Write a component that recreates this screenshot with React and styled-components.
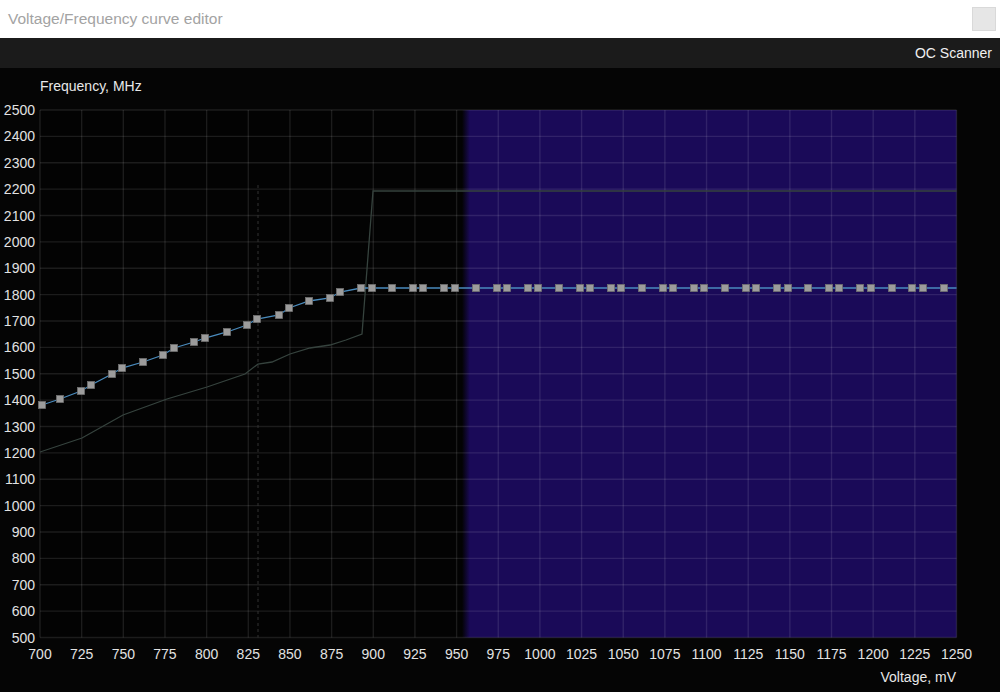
import React from "react";
import styled, { createGlobalStyle } from "styled-components";

const GlobalStyle = createGlobalStyle`
  html, body {
    margin: 0;
    padding: 0;
    background: #050505;
    font-family: "Liberation Sans", Arial, sans-serif;
  }
`;

// plot geometry (page pixels)
const LEFT = 40;
const RIGHT = 956.5;
const TOP = 110;
const BOTTOM = 637.5;
const X = (v) => LEFT + ((v - 700) * (RIGHT - LEFT)) / 550;
const Y = (f) => TOP + ((2500 - f) * (BOTTOM - TOP)) / 2000;

const volts = [];
for (let v = 700; v <= 1250; v += 25) volts.push(v);
const freqs = [];
for (let f = 500; f <= 2500; f += 100) freqs.push(f);

// curve points read off the editor
const rising = [
  [42, 405], [60, 399], [81, 391], [91, 385], [112, 374], [122, 368],
  [143, 362], [163, 355], [174, 348], [194, 342], [205, 338], [227, 332],
  [247, 325], [257, 319], [279, 315], [289, 308], [309, 301], [330, 298],
  [340, 292],
];
const flatX = [
  361, 372, 392, 413, 423, 444, 455, 476, 497, 507, 528, 538, 559, 580, 590,
  611, 621, 642, 663, 673, 694, 704, 725, 746, 756, 777, 788, 808, 829, 839,
  860, 871, 892, 912, 923, 944,
];
const points = [...rising, ...flatX.map((x) => [x, 288])];

const baseCurve = [
  [40, 452], [82, 438], [123, 415], [167, 399], [207, 387], [245, 374],
  [258, 364], [272, 362], [290, 354], [310, 348], [330, 345], [346, 340],
  [362, 334], [373, 191], [RIGHT, 191],
];

const Window = styled.div`
  display: flex;
  flex-direction: column;
  width: 1000px;
  height: 692px;
  overflow: hidden;
  background: #050505;
`;

const TitleBar = styled.div`
  height: 38px;
  display: flex;
  align-items: center;
  justify-content: space-between;
  padding: 0 4px 0 8px;
  background: #ffffff;
  flex-shrink: 0;
`;

const TitleText = styled.span`
  font-size: 15.5px;
  color: #a3a3a3;
`;

const WinButton = styled.div`
  width: 22px;
  height: 22px;
  background: #e6e6e6;
  border: 1px solid #d9d9d9;
`;

const Toolbar = styled.div`
  height: 30px;
  display: flex;
  align-items: center;
  justify-content: flex-end;
  padding-right: 8px;
  background: #1b1b1b;
  flex-shrink: 0;
`;

const ScanButton = styled.span`
  font-size: 14px;
  color: #f0f0f0;
  cursor: pointer;
`;

const ChartPanel = styled.div`
  flex: 1;
  display: flex;
  flex-direction: column;
  padding-top: 8px;
  background: #050505;
`;

const AxisTitle = styled.div`
  height: 20px;
  line-height: 20px;
  font-size: 14px;
  color: #e8e8e8;
  text-align: ${({ $right }) => ($right ? "right" : "left")};
  padding: ${({ $right }) => ($right ? "0 44px 0 0" : "0 0 0 40px")};
  margin-top: ${({ $right }) => ($right ? "1px" : "0")};
`;

const Plot = styled.svg`
  display: block;
  width: 1000px;
  height: 570px;
  font-family: "Liberation Sans", Arial, sans-serif;
  font-size: 14px;
`;

const GRID = "rgba(255,255,255,0.1)";

const Chart = () => (
  <Plot viewBox="0 96 1000 570">
    <defs>
      <linearGradient id="zoneEdge" x1="0" x2="1" y1="0" y2="0">
        <stop offset="0" stopColor="#1a0a58" stopOpacity="0" />
        <stop offset="1" stopColor="#1a0a58" />
      </linearGradient>
    </defs>

    <rect x={LEFT} y={TOP} width={RIGHT - LEFT} height={BOTTOM - TOP} fill="#030303" />
    <rect x={462} y={TOP} width={8} height={BOTTOM - TOP} fill="url(#zoneEdge)" />
    <rect x={470} y={TOP} width={RIGHT - 470} height={BOTTOM - TOP} fill="#1a0a58" />

    {volts.map((v) => (
      <line key={"v" + v} x1={X(v)} x2={X(v)} y1={TOP} y2={BOTTOM} stroke={GRID} strokeWidth="1.4" />
    ))}
    {freqs.map((f) => (
      <line key={"f" + f} x1={LEFT} x2={RIGHT} y1={Y(f)} y2={Y(f)} stroke={GRID} strokeWidth="1.4" />
    ))}

    <line x1={258} x2={258} y1={185} y2={BOTTOM} stroke="#333" strokeDasharray="3 3" />

    <polyline
      points={baseCurve.map((p) => p.join(",")).join(" ")}
      fill="none"
      stroke="#36433e"
      strokeWidth="1.3"
    />

    <polyline
      points={[...points, [RIGHT, 288]].map((p) => p.join(",")).join(" ")}
      fill="none"
      stroke="#4a8bbd"
      strokeWidth="1.3"
    />
    {points.map(([x, y], i) => (
      <rect key={i} x={x - 3.5} y={y - 3.5} width="7" height="7" fill="#9c9c9c" stroke="#707070" strokeWidth="0.8" />
    ))}

    {freqs.map((f) => (
      <text key={"ft" + f} x={35} y={Y(f) + 5} textAnchor="end" fill="#e2e2e2">
        {f}
      </text>
    ))}
    {volts.map((v) => (
      <text key={"vt" + v} x={X(v)} y={659} textAnchor="middle" fill="#e2e2e2">
        {v}
      </text>
    ))}
  </Plot>
);

export default function App() {
  return (
    <>
      <GlobalStyle />
      <Window>
        <TitleBar>
          <TitleText>Voltage/Frequency curve editor</TitleText>
          <WinButton />
        </TitleBar>
        <Toolbar>
          <ScanButton>OC Scanner</ScanButton>
        </Toolbar>
        <ChartPanel>
          <AxisTitle>Frequency, MHz</AxisTitle>
          <Chart />
          <AxisTitle $right>Voltage, mV</AxisTitle>
        </ChartPanel>
      </Window>
    </>
  );
}
